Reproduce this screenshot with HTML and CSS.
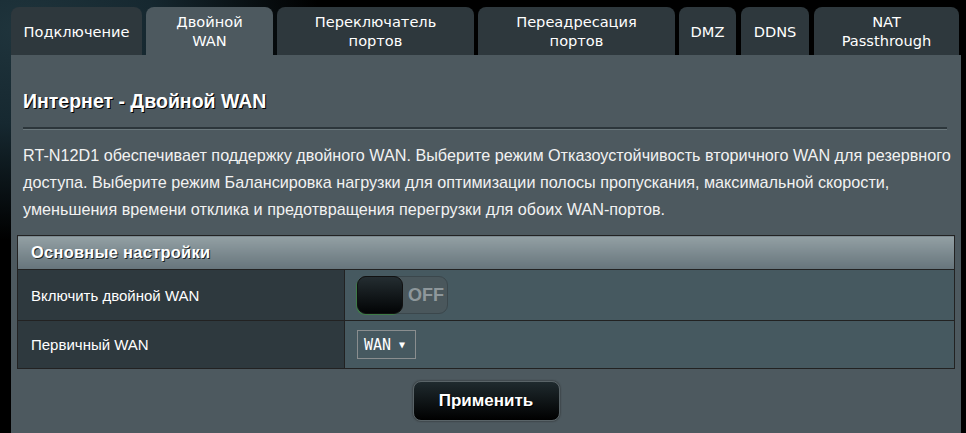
FILE: index.html
```html
<!DOCTYPE html>
<html lang="ru">
<head>
    <meta charset="UTF-8">
    <title>Интернет - Двойной WAN</title>
    <link rel="stylesheet" href="styles.css">
</head>
<body>

<div class="page">
    <ul class="tabs">
        <li class="tab t-conn">Подключение</li>
        <li class="tab t-dual active">Двойной<br>WAN</li>
        <li class="tab t-wide">Переключатель<br>портов</li>
        <li class="tab t-wide">Переадресация<br>портов</li>
        <li class="tab t-dmz">DMZ</li>
        <li class="tab t-ddns">DDNS</li>
        <li class="tab t-nat">NAT<br>Passthrough</li>
    </ul>

    <div class="panel">
        <h1>Интернет - Двойной WAN</h1>
        <div class="divider"></div>
        <p class="desc">RT-N12D1 обеспечивает поддержку двойного WAN. Выберите режим Отказоустойчивость вторичного WAN для резервного доступа. Выберите режим Балансировка нагрузки для оптимизации полосы пропускания, максимальной скорости, уменьшения времени отклика и предотвращения перегрузки для обоих WAN-портов.</p>

        <table class="settings">
            <thead>
                <tr><th colspan="2">Основные настройки</th></tr>
            </thead>
            <tbody>
                <tr class="row-toggle">
                    <td class="label">Включить двойной WAN</td>
                    <td class="value">
                        <div class="switch">
                            <span class="knob"></span>
                            <span class="switch-text">OFF</span>
                        </div>
                    </td>
                </tr>
                <tr class="row-select">
                    <td class="label">Первичный WAN</td>
                    <td class="value">
                        <div class="select">WAN <span class="arrow">▼</span></div>
                    </td>
                </tr>
            </tbody>
        </table>

        <div class="actions">
            <button type="button" class="apply">Применить</button>
        </div>
    </div>
</div>

</body>
</html>
```

FILE: styles.css
```css
html, body { height: 100%; }
body { margin: 0; background-color: #000; background-image: radial-gradient(ellipse 300px 210px at 20px 30px, #1f343c 0%, #162830 45%, rgba(0,0,0,0) 100%); font-family: "Liberation Sans", Arial, sans-serif; color: #fff; overflow: hidden; }
.page { padding: 7px 5px 0 11px; }

.tabs { list-style: none; margin: 0; padding: 0; display: flex; gap: 4px; height: 48px; }
.tab { flex: none; display: flex; align-items: center; justify-content: center; text-align: center; background-color: #2e383d; border-radius: 8px 8px 0 0; font-family: "DejaVu Sans", Verdana, sans-serif; font-size: 14.6px; line-height: 19px; color: #fff; }
.tab.active { background-color: #4d595f; }
.t-conn { width: 131px; }
.t-dual { width: 127px; }
.t-wide { width: 197px; }
.t-dmz { width: 57px; }
.t-ddns { width: 68px; margin-left: 1px; }
.t-nat { width: 145px; margin-left: 1px; }

.panel { background-color: #4d595f; height: 378px; padding: 0 6px; width: 938px; }
h1 { margin: 0; padding: 34px 0 0 6px; font-size: 19.5px; font-weight: bold; line-height: 24px; text-shadow: 1px 1px 0 #000; }
.divider { margin: 14px 8px 0 6px; border-top: 2px solid #2c363b; border-bottom: 1px solid #6a777c; height: 0; }
.desc { margin: 12px -6px 0 6px; font-size: 16.2px; line-height: 27px; color: #f2f2f2; }

.settings { margin-top: 12px; width: 938px; border-collapse: collapse; border: 1px solid #222; }
.settings th { height: 33px; padding: 0 0 0 13px; text-align: left; font-size: 16.4px; font-weight: bold; letter-spacing: 0.3px; text-shadow: 1px 1px 0 #1b2326; background: linear-gradient(#93a0a4, #66747b); border-bottom: 1px solid #222; }
.settings td { border-top: 1px solid #222; padding: 0; font-size: 15px; }
.settings .label { width: 313px; padding-left: 13px; background-color: #2e393e; border-right: 1px solid #222; }
.settings .value { background-color: #465960; padding-left: 12px; }
.row-toggle td { height: 50px; }
.row-select td { height: 47px; }

.switch { width: 91px; height: 38px; border: 1px solid #3b474c; border-radius: 9px; background-color: #4a575c; display: flex; align-items: center; box-sizing: border-box; }
.knob { width: 46px; height: 38px; margin-left: -1px; box-sizing: border-box; border-radius: 9px; background: linear-gradient(#242d31, #020405); border: 1px solid #111; box-shadow: -1px 1px 0 #3d7b47; }
.switch-text { margin-left: 5px; font-size: 18px; font-weight: bold; color: #8e979b; }

.select { display: inline-flex; align-items: center; height: 29px; width: 59px; padding: 0 0 0 6px; border: 1px solid #8a8e8f; font-family: "DejaVu Sans Mono", monospace; font-size: 15px; color: #fff; box-sizing: border-box; }
.select .arrow { font-size: 10px; margin-left: 8px; }

.actions { display: flex; justify-content: center; padding-top: 12px; }
.apply { width: 147px; height: 40px; border-radius: 8px; border: 1px solid #5a6468; background: linear-gradient(#1f2a2e, #000); box-shadow: 0 0 2px #222; color: #fff; font-family: "Liberation Sans", Arial, sans-serif; font-size: 17px; font-weight: bold; text-shadow: 1px 1px 0 #000; }
```
